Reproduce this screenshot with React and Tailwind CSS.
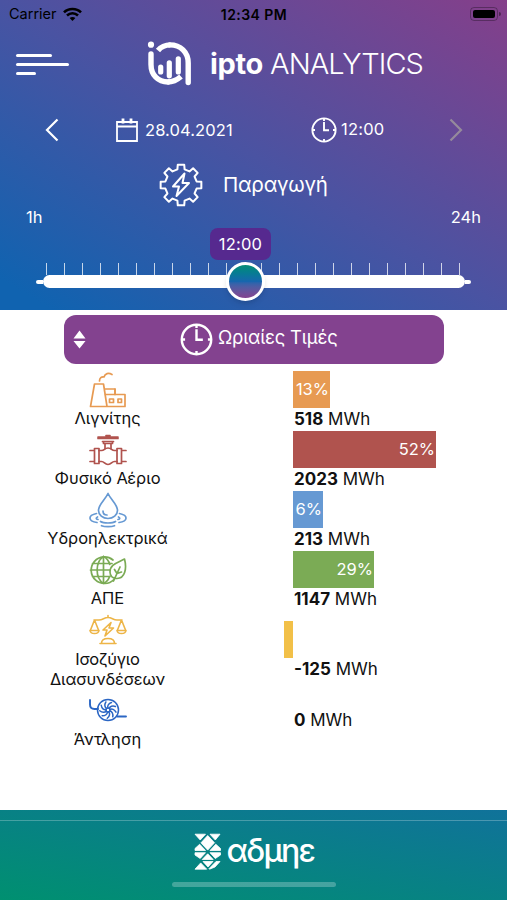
import React, { useState } from 'react';

const sources = [
  { id: 'lignite', label: 'Λιγνίτης', value: 518, percent: '13%', width: 37, color: 'bg-[#e79a52]', Icon: FactoryIcon },
  { id: 'gas', label: 'Φυσικό Αέριο', value: 2023, percent: '52%', width: 143, color: 'bg-[#b0534e]', Icon: ValveIcon },
  { id: 'hydro', label: 'Υδροηλεκτρικά', value: 213, percent: '6%', width: 30, color: 'bg-[#6699d3]', Icon: DropIcon },
  { id: 'res', label: 'ΑΠΕ', value: 1147, percent: '29%', width: 81, color: 'bg-[#7bab55]', Icon: GlobeIcon },
];

// 8 teeth around the centre of a 44x44 box
const gearPoints = Array.from({ length: 8 }, (_, i) => {
  const tooth = [[16, -13], [20.6, -9], [20.6, 9], [16, 13]];
  return tooth
    .map(([r, a]) => {
      const angle = ((i * 45 + a - 90) * Math.PI) / 180;
      return `${(22 + r * Math.cos(angle)).toFixed(2)},${(22 + r * Math.sin(angle)).toFixed(2)}`;
    })
    .join(' ');
}).join(' ');

function FactoryIcon() {
  return (
    <svg width="38" height="36" viewBox="0 0 38 36" fill="none" stroke="#e79a52" strokeWidth="1.7" strokeLinejoin="round" strokeLinecap="round">
      <path d="M1.500 34.500 5.500 12h9l3.500 22.500zM17 34.500h19v-12H26v-5.500H16" />
      <path d="M26 17v5.500h-9.500M20.500 27h4v3.500h-4zM29 27h3.500v3.500H29z" />
      <path d="M10.500 9c0-3 2-4.500 4.500-4 1-3.500 4.500-4.500 8-2.500" />
    </svg>
  );
}

function ValveIcon() {
  return (
    <svg width="38" height="32" viewBox="0 0 38 32" fill="none" stroke="#b0534e" strokeWidth="1.7" strokeLinejoin="round" strokeLinecap="round">
      <path d="M9 3.200h20M9 4.500h20M17 1.500h4M13.500 7.500h11M14.500 7.500v2h9v-2M16 9.500v5M22 9.500v5" />
      <path d="M5.500 14.500h4.500v15H5.500zM28 14.500h4.500v15H28zM1 16.500h4.500M1 27.500h4.500M32.500 16.500H37M32.500 27.500H37" />
      <path d="M10 16.500h2.500c3 0 3-2.500 6.500-2.500s3.500 2.500 6.500 2.500H28M10 27.500h2.500c3 0 3 3 6.500 3s3.500-3 6.500-3H28" />
    </svg>
  );
}

function DropIcon() {
  return (
    <svg width="38" height="36" viewBox="0 0 38 36" fill="none" stroke="#6699d3" strokeWidth="1.7" strokeLinejoin="round" strokeLinecap="round">
      <path d="M19 1.500C16 8 9.500 12.500 9.500 18.500a9.500 8 0 0 0 19 0C28.500 12.500 22 8 19 1.500zM14 19c0 2.500 1.500 4 4 4" />
      <path d="M7.500 21.500c-9 2-8.500 7.500.5 9M30.500 21.500c9 2 8.500 7.500-.5 9M11.500 29.500c3 2 12 2 15 0M12.500 33.700c3 1.200 10 1.200 13 0" />
      <path d="M8.500 25c-2 1-1.500 2 .5 2.500M29.500 25c2 1 1.500 2-.5 2.500" />
    </svg>
  );
}

function GlobeIcon() {
  return (
    <svg width="38" height="30" viewBox="0 0 38 30" fill="none" stroke="#7bab55" strokeWidth="1.7" strokeLinejoin="round" strokeLinecap="round">
      <path d="M25 24.500A13.300 13.300 0 1 1 24 5M14.500 1.500v27M1.500 15H21M3.500 8.500H23M3.500 21.500H21" />
      <path d="M14.500 1.500C6 7 6 23 14.500 28.500c4-2 5.500-5 6-7M14.500 1.500c4 2 5.500 5 6.300 8" />
      <path d="M35.500 4c-7 4-14.500 5-14.500 13 0 4 3 6.500 7 6.500 8 0 10-10 7.500-19.500zM24.500 26l6.500-14M28 18.500l-2.500-4M28 18.500l4.500-1.500" />
    </svg>
  );
}

function ScalesIcon() {
  return (
    <svg width="38" height="31" viewBox="0 0 38 31" fill="none" stroke="#edb547" strokeWidth="1.600" strokeLinejoin="round" strokeLinecap="round">
      <path d="M5 6h5c4 0 5-2.500 9-2.500S24 6 28 6h5M19 1.500v2M5.500 6 1.500 16M5.500 6l4 10M32.500 6l-4 10M32.500 6l4 10" />
      <path d="M1 16.500h9c-.5 4-8.500 4-9 0zM28 16.500h9c-.5 4-8.500 4-9 0zM11 29.500h16M12.500 29.500c0-3 2.500-5 6.500-5s6.500 2 6.500 5" />
      <path d="M22 8.500 14 16h4l-2 6 8.500-8h-4.500z" />
    </svg>
  );
}

function TurbineIcon() {
  return (
    <svg width="40" height="24" viewBox="0 0 40 24" fill="none" stroke="#2b66c4" strokeWidth="1.500" strokeLinejoin="round" strokeLinecap="round">
      <circle cx="20" cy="12" r="10.500" />
      <circle cx="20" cy="12" r="2" />
      {[0, 40, 80, 120, 160, 200, 240, 280, 320].map((a) => (
        <path key={a} d="M20 10c-1-2 .5-4.500 3.500-5.500" transform={`rotate(${a} 20 12)`} />
      ))}
      <path strokeWidth="1.900" d="M2 2v4.500c0 2.500 1.500 4.500 4.500 4.500h3.500M29 18.500h9" />
    </svg>
  );
}

function ClockIcon({ size, stroke = 1.9 }) {
  return (
    <svg width={size} height={size} viewBox="0 0 26 26" fill="none" stroke="currentColor" strokeWidth={stroke} className="shrink-0">
      <circle cx="13" cy="13" r="11.600" />
      <path d="M13 5v8.200h5M13 1.500v2.500M13 22v2.500M1.500 13H4M22 13h2.500" />
    </svg>
  );
}

function AppLogo() {
  return (
    <svg width="48" height="48" viewBox="0 0 48 48" fill="none" stroke="white" strokeWidth="5.400" strokeLinecap="round">
      <circle cx="6" cy="4.700" r="3.100" fill="white" stroke="none" />
      <path d="M6 14v10.500C6 35 13 42 23 42" />
      <path strokeLinecap="butt" d="M22.500 42c5 0 9-1.500 13.500-5.500" />
      <path strokeLinecap="butt" d="M13 10.500C16.500 6.200 21 4.900 25.500 4.900" />
      <path d="M25 4.900c10.500 0 18.200 7.300 18.200 18V42.500" />
      <path strokeWidth="5.200" d="M15.700 27v5M24.300 22.800v13M33.300 18.800V32" />
    </svg>
  );
}

function CompanyLogo() {
  return (
    <div className="mt-1 flex h-[50px] w-[124px] items-center">
      <svg width="31" height="44" viewBox="0 0 31 44" className="mt-[6px] shrink-0" fill="white" stroke="white" strokeLinejoin="round">
        <path
          strokeWidth="0.800"
          d="M3 3.200h10.500L8.200 9zM18 3.200h10L23.300 9zM15.700 4.500l6.800 7.300-6.800 7.300L9 11.800zM3 19.500v-2l4.700-4.300 5.800 6.300zM18 19.500l5.800-6.300 4.700 4.300v2zM3 21.700h10.500L8.200 27.500 3 24zM18 21.700h10.500V24l-5.200 3.500zM15.700 22.800l5.500 5.700h-11zM11 30.500h10l-5 5.500zM3 38.200l5.700-6.300 6 6.300zM24 30.500h4l-5 5.500-5.500 2.200-.5-.5z"
        />
      </svg>
      <span className="mt-[2px] ml-1 text-[32px] leading-[48px] font-medium tracking-[-1.7px] text-white">αδμηε</span>
    </div>
  );
}

function StatusBar() {
  return (
    <div className="flex h-7 items-center justify-between pr-1.5 pl-[9px] text-black">
      <div className="flex w-40 items-center gap-1.5">
        <span className="text-[14.5px]">Carrier</span>
        <svg width="19" height="15" viewBox="0 0 19 15" fill="none" stroke="black" strokeWidth="2.600">
          <path d="M1 5.300C5.500.8 13.500.8 18 5.300M4 8.500c3.200-3 7.800-3 11 0" />
          <path d="M6.600 11c1.700-1.500 4.100-1.500 5.800 0l-2.900 3z" fill="black" stroke="none" />
        </svg>
      </div>
      <span className="pr-0.5 text-[14px] font-semibold tracking-[0.45px]">12:34 PM</span>
      <div className="flex w-40 items-center justify-end gap-px">
        <div className="h-[14px] w-[28px] rounded-[4px] border border-black/30 p-[2px]">
          <div className="h-full rounded-[2px] bg-black" />
        </div>
        <div className="h-1 w-0.5 rounded-r bg-black/40" />
      </div>
    </div>
  );
}

function HourSlider({ hour }) {
  return (
    <div className="relative mx-9 h-[62px] pt-[35px]">
      <div className="mr-[11px] ml-[10px] flex h-3 justify-between">
        {Array.from({ length: 24 }, (_, i) => (
          <div key={i} className="h-full w-px bg-white/75" />
        ))}
      </div>
      <div className="flex items-center">
        <div className="h-1 w-[7px] rounded-l-full bg-white" />
        <div className="h-[13px] flex-1 rounded-full bg-white" />
        <div className="h-1 w-[6px] rounded-r-full bg-white" />
      </div>
      <div className="absolute top-0 left-[174px] flex h-8 w-[61px] items-center justify-center rounded-lg bg-[#56298f] text-[16.5px] tracking-[0.2px]">
        {hour}
      </div>
      <div className="absolute top-[34px] left-[190px] h-[39px] w-[39px] rounded-full border-[3px] border-white bg-linear-to-b from-[#088d75] via-[#1766ae] to-[#83428f] shadow-md" />
    </div>
  );
}

function SourceRow({ source }) {
  const { label, value, percent, width, color, Icon } = source;
  return (
    <div className="flex h-[60px]">
      <div className="flex w-[215px] flex-col items-center">
        <div className="flex h-[37px] items-center">
          <Icon />
        </div>
        <span className="text-[16.5px] leading-[21px] tracking-[-0.05px]">{label}</span>
      </div>
      <div className="pl-[78px]">
        <div className={`flex h-[37px] items-center justify-end pr-px text-[16.5px] text-white ${color}`} style={{ width }}>
          {percent}
        </div>
        <Amount value={value} />
      </div>
    </div>
  );
}

function Amount({ value }) {
  return (
    <div className="pl-px text-[17px] leading-[22px] whitespace-nowrap">
      <b>{value}</b> MWh
    </div>
  );
}

const App = () => {
  const [hour] = useState('12:00');

  return (
    <div className="flex h-[900px] w-[507px] flex-col overflow-hidden bg-white font-['Inter','Noto_Sans',sans-serif] text-[#111]">
      <header className="h-[310px] bg-linear-to-tr/srgb from-[#1063b0] from-5% via-[#4a53a2] via-50% to-[#853f8a] text-white">
        <StatusBar />
        <div className="flex h-[72px] items-center pl-4">
          <div className="flex w-[129px] flex-col gap-[6px]">
            <div className="h-[3px] w-9 rounded-full bg-white" />
            <div className="h-[3px] w-[53px] rounded-full bg-white" />
            <div className="h-[3px] w-5 rounded-full bg-white" />
          </div>
          <AppLogo />
          <h1 className="ml-[17px] text-[29px] font-light tracking-[-0.95px] whitespace-nowrap">
            <span className="font-bold tracking-[-0.35px]">ipto</span> ANALYTICS
          </h1>
        </div>

        <div className="flex h-[60px] items-center pl-[45px]">
          <svg width="14" height="24" viewBox="0 0 14 24" fill="none" stroke="white" strokeWidth="2.200">
            <path d="M12.500 1.500 2 12l10.500 10.500" />
          </svg>
          <div className="ml-[56px] flex w-[196px] items-center gap-[6px]">
            <svg width="24" height="26" viewBox="0 0 24 26" fill="none" stroke="white" strokeWidth="1.800">
              <path d="M2 5h20v19H2zM2 9.500h20" />
              <path d="M8 1.500v5M16 1.500v5" strokeWidth="2.800" />
            </svg>
            <span className="text-[16.5px] tracking-[0.1px]">28.04.2021</span>
          </div>
          <div className="flex w-[138px] items-center gap-[4px]">
            <ClockIcon size={26} />
            <span className="pb-0.5 text-[16.5px] tracking-[0.2px]">{hour}</span>
          </div>
          <svg width="14" height="24" viewBox="0 0 14 24" fill="none" stroke="#958a9c" strokeWidth="2.200">
            <path d="M1.500 1.500 12 12 1.500 22.500" />
          </svg>
        </div>

        <div className="flex h-[50px] items-center gap-[20px] pl-[159px]">
          <svg width="44" height="44" viewBox="0 0 44 44" fill="none" stroke="white" strokeWidth="2" strokeLinejoin="round">
            <polygon points={gearPoints} />
            <path d="M25.500 10.500 14 23.500h6l-2.500 9.500L30 20h-6.500z" />
          </svg>
          <span className="text-[20.5px] tracking-[-0.25px]">Παραγωγή</span>
        </div>

        <div className="flex h-[18px] items-center justify-between px-[26px] pb-[4px] text-[16.5px] leading-none">
          <span>1h</span>
          <span>24h</span>
        </div>
        <HourSlider hour={hour} />
      </header>

      <main className="flex-1">
        <button className="mt-[5px] ml-16 flex h-[49px] w-[380px] items-center rounded-xl bg-[#83428f] pl-[9px] text-white">
          <svg width="13" height="19" viewBox="0 0 13 19" fill="white">
            <path d="M.5 8.500 6.500.5l6 8zM.5 11l6 7.500 6-7.500z" />
          </svg>
          <div className="ml-[94px] flex items-center gap-[5px]">
            <ClockIcon size={33} />
            <span className="pb-1 text-[18.5px] tracking-[-0.2px]">Ωριαίες Τιμές</span>
          </div>
        </button>

        <div className="mt-[7px]">
          {sources.map((source) => (
            <SourceRow key={source.id} source={source} />
          ))}
          <div className="flex h-20">
            <div className="flex w-[215px] flex-col items-center pt-[3px]">
              <ScalesIcon />
              <span className="mt-1 w-32 text-center text-[16.5px] leading-5 tracking-[-0.2px]">Ισοζύγιο Διασυνδέσεων</span>
            </div>
            <div className="flex pt-[10px] pl-[69px]">
              <div className="h-[37px] w-[9px] bg-[#f2c048]" />
              <div className="pt-[37px]">
                <Amount value={-125} />
              </div>
            </div>
          </div>
          <div className="flex h-[60px]">
            <div className="flex w-[215px] flex-col items-center pt-[7px]">
              <TurbineIcon />
              <span className="mt-[5px] text-[16.5px] leading-6">Άντληση</span>
            </div>
            <div className="pt-[18px] pl-[78px]">
              <Amount value={0} />
            </div>
          </div>
        </div>
      </main>

      <footer className="flex h-[90px] flex-col items-center bg-linear-to-tr/srgb from-[#009070] to-[#10729a] pt-[10px]">
        <div className="h-px w-full shrink-0 bg-white/25" />
        <CompanyLogo />
        <div className="mt-[7px] h-[5px] w-[164px] shrink-0 rounded-full bg-white/25" />
      </footer>
    </div>
  );
};

export default App;
